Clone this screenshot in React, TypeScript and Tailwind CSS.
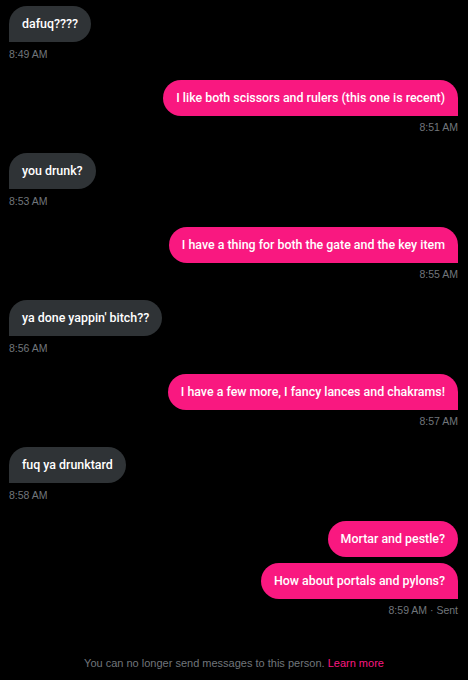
import React from 'react';

type Msg = {
  from: 'me' | 'them';
  texts: string[];
  time: string;
  sent?: boolean;
};

const messages: Msg[] = [
  { from: 'them', texts: ['dafuq????'], time: '8:49 AM' },
  { from: 'me', texts: ['I like both scissors and rulers (this one is recent)'], time: '8:51 AM' },
  { from: 'them', texts: ['you drunk?'], time: '8:53 AM' },
  { from: 'me', texts: ['I have a thing for both the gate and the key item'], time: '8:55 AM' },
  { from: 'them', texts: ["ya done yappin' bitch??"], time: '8:56 AM' },
  { from: 'me', texts: ['I have a few more, I fancy lances and chakrams!'], time: '8:57 AM' },
  { from: 'them', texts: ['fuq ya drunktard'], time: '8:58 AM' },
  { from: 'me', texts: ['Mortar and pestle?', 'How about portals and pylons?'], time: '8:59 AM', sent: true },
];

function Bubble({ text, mine, last }: { text: string; mine: boolean; last: boolean }) {
  const base =
    'h-[36px] px-[13px] flex items-center rounded-[18px] font-["Roboto",sans-serif] font-medium text-[12.4px] leading-[16px] text-white whitespace-nowrap';
  if (mine) {
    return (
      <div className={`${base} bg-[#f91880] ${last ? 'rounded-br-none' : ''}`}>{text}</div>
    );
  }
  return <div className={`${base} bg-[#2f3336] ${last ? 'rounded-bl-none' : ''}`}>{text}</div>;
}

function Group({ msg }: { msg: Msg }) {
  const mine = msg.from === 'me';
  return (
    <div className={`flex flex-col ${mine ? 'items-end' : 'items-start'}`}>
      <div className={`flex flex-col gap-[6px] ${mine ? 'items-end' : 'items-start'}`}>
        {msg.texts.map((t, i) => (
          <Bubble key={i} text={t} mine={mine} last={i === msg.texts.length - 1} />
        ))}
      </div>
      <div className="mt-[3.5px] text-[10.5px] leading-[16px] text-[#71767b]">
        {msg.time}
        {msg.sent && <span> · Sent</span>}
      </div>
    </div>
  );
}

export default function App() {
  return (
    <div
      className="h-[680px] w-[468px] bg-black flex flex-col overflow-hidden"
      style={{ fontFamily: '"Liberation Sans", Arial, sans-serif' }}
    >
      <div className="flex flex-col gap-[18px] pt-[6px] pl-[9px] pr-[10px]">
        {messages.map((m, i) => (
          <Group key={i} msg={m} />
        ))}
      </div>
      <div className="flex-1" />
      <div className="pb-[9px] text-center text-[11px] leading-[16px] text-[#71767b]">
        You can no longer send messages to this person.{' '}
        <span className="text-[#f91880]">Learn more</span>
      </div>
    </div>
  );
}
